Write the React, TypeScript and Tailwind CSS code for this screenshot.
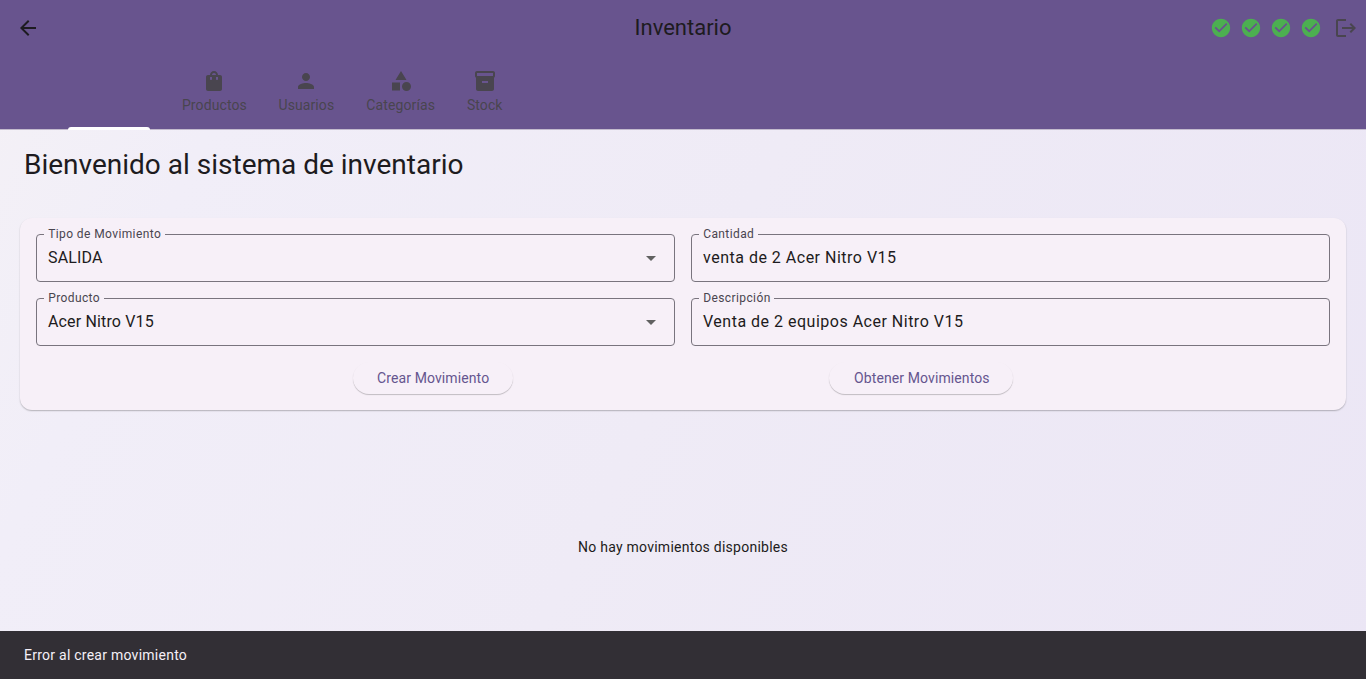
import React from "react";

const paths = {
  back: "M20 11H7.83l5.59-5.59L12 4l-8 8 8 8 1.41-1.41L7.83 13H20v-2z",
  bag: "M18 6h-2c0-2.21-1.79-4-4-4S8 3.79 8 6H6c-1.1 0-2 .9-2 2v12c0 1.1.9 2 2 2h12c1.1 0 2-.9 2-2V8c0-1.1-.9-2-2-2zm-8 4c0 .55-.45 1-1 1s-1-.45-1-1V8h2v2zm2-6c1.1 0 2 .9 2 2h-4c0-1.1.9-2 2-2zm4 6c0 .55-.45 1-1 1s-1-.45-1-1V8h2v2z",
  person: "M12 12c2.21 0 4-1.79 4-4s-1.79-4-4-4-4 1.79-4 4 1.79 4 4 4zm0 2c-2.67 0-8 1.34-8 4v2h16v-2c0-2.66-5.33-4-8-4z",
  category: "M12 2l-5.5 9h11zM17.5 13a4.5 4.5 0 1 0 0 9 4.5 4.5 0 1 0 0-9zM3 13.5h8v8H3z",
  inventory: "M20 2H4c-1 0-2 .9-2 2v3.01c0 .72.43 1.34 1 1.69V20c0 1.1 1.1 2 2 2h14c.9 0 2-.9 2-2V8.7c.57-.35 1-.97 1-1.69V4c0-1.1-1-2-2-2zm-5 12H9v-2h6v2zm5-7H4V4h16v3z",
  check: "M12 2C6.48 2 2 6.48 2 12s4.48 10 10 10 10-4.48 10-10S17.52 2 12 2zm-2 15l-5-5 1.41-1.41L10 14.17l7.59-7.59L19 8l-9 9z",
  logout: "M17 7l-1.41 1.41L18.17 11H8v2h10.17l-2.58 2.58L17 17l5-5zM4 5h8V3H4c-1.1 0-2 .9-2 2v14c0 1.1.9 2 2 2h8v-2H4V5z",
  dropdown: "M7 10l5 5 5-5z",
};

function Icon({ name, className }: { name: keyof typeof paths; className: string }) {
  return (
    <svg viewBox="0 0 24 24" fill="currentColor" className={className} aria-hidden="true">
      <path d={paths[name]} />
    </svg>
  );
}

function Tab({ icon, label, className }: { icon: keyof typeof paths; label: string; className: string }) {
  return (
    <div className={`flex h-full flex-col items-center pt-[13px] text-[#49454f] ${className}`}>
      <Icon name={icon} className="size-6" />
      <span className="mt-0.5 whitespace-nowrap text-sm leading-5 tracking-[0.1px]">{label}</span>
    </div>
  );
}

function Field({ label, value, select, spacing }: { label: string; value: string; select?: boolean; spacing: string }) {
  return (
    <div className="relative flex h-12 items-center justify-between rounded border border-[#79747e] pl-[11px] pr-[11px]">
      <span className="absolute -top-[9px] left-[7px] bg-[#f7f0f8] pr-[3.5px] pl-[4.2px] text-xs leading-4 tracking-[0.4px] text-[#49454f]">
        {label}
      </span>
      <span className={`text-base leading-6 text-[#1d1b20] ${spacing}`}>{value}</span>
      {select && <Icon name="dropdown" className="size-6 text-[#616161]" />}
    </div>
  );
}

function PillButton({ label, className }: { label: string; className: string }) {
  return (
    <button
      className={`h-8 rounded-full bg-[#f7f0f8] pl-px text-sm leading-5 tracking-[0.1px] text-[#65558f] shadow-[0_1px_1px_rgba(0,0,0,0.22)] ${className}`}
    >
      {label}
    </button>
  );
}

export default function App() {
  return (
    <div className="flex h-[679px] w-[1366px] flex-col overflow-hidden bg-[linear-gradient(116.4deg,#f4f1f6_0%,#f1eef8_16%,#efebf6_50%,#ebe6f5_100%)] font-[Roboto,sans-serif] text-[#1d1b20] antialiased">
      <header className="h-[130px] shrink-0 border-b border-[#c3bacd] bg-[#68548e]">
        <div className="grid h-14 grid-cols-3 items-center">
          <Icon name="back" className="ml-4 size-6" />
          <h1 className="text-center text-[22px] leading-7">Inventario</h1>
          <div className="flex items-center justify-end pr-2">
            <div className="mr-3 flex gap-2">
              {[0, 1, 2, 3].map((i) => (
                <Icon key={i} name="check" className="size-[22px] text-[#4caf50]" />
              ))}
            </div>
            <Icon name="logout" className="size-6 text-[#49454f]" />
          </div>
        </div>
        <nav className="flex h-[74px] pl-[52px]">
          <div className="flex w-[114.4px] items-end pl-4">
            <div className="h-[3px] w-[82px] rounded-t-[3px] bg-white" />
          </div>
          <Tab icon="bag" label="Productos" className="w-24" />
          <Tab icon="person" label="Usuarios" className="w-[88px]" />
          <Tab icon="category" label="Categorías" className="w-[100.6px]" />
          <Tab icon="inventory" label="Stock" className="w-[67.5px]" />
        </nav>
      </header>

      <main className="flex grow flex-col">
        <h2 className="mt-[17px] ml-6 text-[28px] leading-9">Bienvenido al sistema de inventario</h2>
        <section className="mx-5 mt-[35px] h-48 shrink-0 rounded-xl bg-[#f7f0f8] p-4 shadow-[0_1px_1.5px_rgba(0,0,0,0.26)]">
          <div className="grid grid-cols-2 gap-4">
            <Field label="Tipo de Movimiento" value="SALIDA" select spacing="tracking-[0.15px]" />
            <Field label="Cantidad" value="venta de 2 Acer Nitro V15" spacing="tracking-[0.5px]" />
            <Field label="Producto" value="Acer Nitro V15" select spacing="tracking-[0.15px]" />
            <Field label="Descripción" value="Venta de 2 equipos Acer Nitro V15" spacing="tracking-[0.5px]" />
          </div>
          <div className="mt-4 flex justify-evenly">
            <PillButton label="Crear Movimiento" className="w-40" />
            <PillButton label="Obtener Movimientos" className="w-[184px]" />
          </div>
        </section>
        <div className="flex grow items-center justify-center pt-[53px]">
          <p className="text-sm leading-5 tracking-[0.25px]">No hay movimientos disponibles</p>
        </div>
      </main>

      <footer className="flex h-12 shrink-0 items-center bg-[#322f35] pl-6 text-sm leading-5 tracking-[0.25px] text-[#f5eff7]">
        Error al crear movimiento
      </footer>
    </div>
  );
}
